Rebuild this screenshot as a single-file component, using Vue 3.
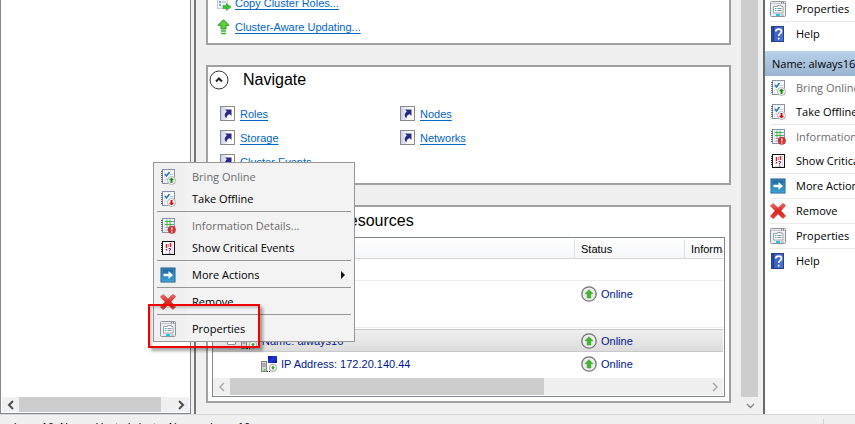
<script setup>
const clusterLinks = [
  { icon: 'copy', label: 'Copy Cluster Roles...' },
  { icon: 'update', label: 'Cluster-Aware Updating...' },
]

const navLinks = ['Roles', 'Nodes', 'Storage', 'Networks', 'Cluster Events']

const menuGroups = [
  [
    { icon: 'online', label: 'Bring Online', disabled: true },
    { icon: 'offline', label: 'Take Offline' },
  ],
  [
    { icon: 'info', label: 'Information Details...', disabled: true },
    { icon: 'events', label: 'Show Critical Events' },
  ],
  [{ icon: 'more', label: 'More Actions', submenu: true }],
  [{ icon: 'remove', label: 'Remove' }],
  [{ icon: 'props', label: 'Properties' }],
]

const clusterActions = [
  [{ icon: 'props', label: 'Properties' }],
  [{ icon: 'help', label: 'Help' }],
]
const resourceActions = [...menuGroups, [{ icon: 'help', label: 'Help' }]]
</script>

<template>
  <svg class="sprite" aria-hidden="true">
    <defs>
      <linearGradient id="g-blue" x1="0" y1="0" x2="0" y2="1">
        <stop offset="0" stop-color="#1c5f97" /><stop offset="1" stop-color="#35a5d8" />
      </linearGradient>
      <linearGradient id="g-help" x1="0" y1="0" x2="1" y2="0">
        <stop offset="0" stop-color="#233f9c" /><stop offset=".25" stop-color="#3a5fc4" /><stop offset="1" stop-color="#4a74d6" />
      </linearGradient>
      <linearGradient id="g-nav" x1="0" y1="0" x2="1" y2="0">
        <stop offset="0" stop-color="#c9cdec" /><stop offset=".6" stop-color="#ffffff" />
      </linearGradient>
      <linearGradient id="g-red" x1="0" y1="0" x2="0" y2="1">
        <stop offset="0" stop-color="#f0706c" /><stop offset=".5" stop-color="#dc2622" /><stop offset="1" stop-color="#e2433c" />
      </linearGradient>
      <linearGradient id="g-screen" x1="0" y1="0" x2="1" y2="1">
        <stop offset="0" stop-color="#0a1390" /><stop offset=".5" stop-color="#1c36d8" /><stop offset="1" stop-color="#0a1a86" />
      </linearGradient>
    </defs>
    <symbol id="notebook" viewBox="0 0 16 16">
      <rect x="2.5" y=".5" width="12" height="14" fill="#f7f9fc" stroke="#8792ac" />
      <path d="M1 2.500h2M1 4.500h2M1 6.500h2M1 8.500h2M1 10.500h2M1 12.500h2" stroke="#6a6a6a" />
      <path d="M4.500 1v13" stroke="#dfe3ea" />
    </symbol>
    <symbol id="online" viewBox="0 0 16 16">
      <use href="#notebook" />
      <path d="M5 5l1.500 2 3-4" fill="none" stroke="#2277c4" stroke-width="1.500" />
      <path d="M10 5.500h3M5.500 10h2" stroke="#b9c4d2" />
      <circle cx="11.500" cy="11.500" r="4" fill="#fff" stroke="#b0b0b0" />
      <path d="M11.500 8.500l2.800 2.800h-1.800V14h-2v-2.700H8.700z" fill="#159215" />
    </symbol>
    <symbol id="offline" viewBox="0 0 16 16">
      <use href="#notebook" />
      <path d="M5 5l1.500 2 3-4" fill="none" stroke="#2277c4" stroke-width="1.500" />
      <path d="M10 5.500h3M5.500 10h2" stroke="#b9c4d2" />
      <circle cx="11.500" cy="11.500" r="4" fill="#fff" stroke="#b0b0b0" />
      <path d="M11.500 14.500l2.800-2.800h-1.800V9h-2v2.700H8.700z" fill="#cf1010" />
    </symbol>
    <symbol id="info" viewBox="0 0 16 16">
      <use href="#notebook" />
      <path d="M11 3.500h3M11 6.500h3M5.500 9.500h6M5.500 12h3" stroke="#8095b8" />
      <path d="M7 1.500v7M10 1.500v7M5 3.500h7M5 6.500h7" stroke="#3cb83c" />
      <circle cx="11.800" cy="11.800" r="4" fill="#cf3434" />
      <path d="M11.800 9.300v3M11.800 13.200v1.200" stroke="#ffe4e4" stroke-width="1.400" />
    </symbol>
    <symbol id="events" viewBox="0 0 16 16">
      <rect x="2.500" y="1.500" width="12" height="13" fill="#fff" stroke="#111" />
      <path d="M1 3.500h2M1 5.500h2M1 7.500h2M1 9.500h2M1 11.500h2" stroke="#222" />
      <path d="M12.500 3v11M5 13.500h8" stroke="#dcdcdc" />
      <path d="M6.500 4v4M10.500 3v4M6.500 9v1.500" stroke="#e01717" stroke-width="1.500" />
      <path d="M8.500 8.500h2v1.500h-1v1.500M9 13h1.500" fill="none" stroke="#7c1fa3" />
      <path d="M8.500 4v3" stroke="#8fa0e8" />
    </symbol>
    <symbol id="more" viewBox="0 0 16 16">
      <rect x="1" y="1" width="14" height="14" fill="url(#g-blue)" stroke="#1b5d8f" />
      <rect x="2" y="2" width="12" height="12" fill="none" stroke="#5aa6cf" stroke-width=".6" />
      <path d="M3.500 6.700h5V4L13 8l-4.500 4V9.300h-5z" fill="#fff" />
    </symbol>
    <symbol id="remove" viewBox="0 0 16 16">
      <path d="M.3 2.800L3.300.4 8 5 12.800.3l2.900 2.100-4.700 5.300 4.700 5.400-2.800 2.500L8 10.900l-4.700 4.800-3-2.500 4.700-5.500z" fill="url(#g-red)" stroke="#c33" stroke-width=".5" />
    </symbol>
    <symbol id="props" viewBox="0 0 16 16">
      <rect x=".5" y=".5" width="15" height="15" rx="1" fill="#eef0f3" stroke="#8e949c" />
      <path d="M1 2.500h14" stroke="#bfc5cc" />
      <path d="M11 1.800h1M13 1.800h1" stroke="#555" />
      <path d="M3.500 5.500h4v-1h4v1h1.500v6.500H3.500z" fill="#fff" stroke="#9aa2ac" />
      <path d="M5 7.500h1.500M5 9.500h1.500" stroke="#21b5e6" />
      <path d="M7.500 7.500h4M7.500 9.500h4" stroke="#8b939d" />
      <path d="M6 14h4" stroke="#22c3f0" stroke-width="2" />
      <path d="M11 14h3" stroke="#b9bfc7" stroke-width="1.500" />
    </symbol>
    <symbol id="help" viewBox="0 0 16 16">
      <rect x="1.500" y=".5" width="12" height="15" fill="url(#g-help)" stroke="#27418f" />
      <path d="M3.500 1v14" stroke="#22398c" />
      <path d="M5.800 5.500C5.800 2.300 11.500 2.300 11.500 5.500 11.500 7.800 8.700 7.600 8.700 10M8.700 11.700v1.900" fill="none" stroke="#fff" stroke-width="1.700" />
    </symbol>
    <symbol id="nav" viewBox="0 0 16 16">
      <rect x=".5" y=".5" width="14" height="14" fill="url(#g-nav)" stroke="#8a8a8a" />
      <path d="M5 3.500h6.500V10L9.800 8.300C7.500 8.700 6.700 9.800 6.600 12 3.900 10.300 4.200 7.500 6.900 5.400z" fill="#29298a" />
    </symbol>
    <symbol id="copy" viewBox="0 0 16 16">
      <rect x="1.500" y=".5" width="10" height="13" fill="#eef3f8" stroke="#c6d0d8" />
      <path d="M3 4h2M3 7h2M3 10h2" stroke="#4f9bd0" stroke-width="1.500" />
      <path d="M6 4h4M6 7h4" stroke="#9fb0c0" />
      <path d="M7 10.500h3.500V8.500l4.500 3.500-4.500 3.500v-2H7z" fill="#37c62f" stroke="#259a20" stroke-width=".6" />
    </symbol>
    <symbol id="update" viewBox="0 0 16 16">
      <path d="M7.500.7L13 6.300h-3V10H5V6.300H2z" fill="#5bd03a" stroke="#2d9a20" />
      <path d="M5 12h5M5 14.500h5" stroke="#3db52a" stroke-width="1.500" />
    </symbol>
    <symbol id="up" viewBox="0 0 16 16">
      <circle cx="8" cy="8" r="7.200" fill="#ededed" stroke="#747474" stroke-width="1.300" />
      <path d="M8 3.700l4 4H9.800v4.300H6.200V7.700H4z" fill="#43b52c" stroke="#2b9a1c" stroke-width=".5" />
    </symbol>
    <symbol id="server" viewBox="0 0 16 16">
      <rect x=".5" y="5.500" width="5" height="10" fill="#d5d5d5" stroke="#858585" />
      <path d="M1.500 8h3M1.500 10h3" stroke="#777" />
      <path d="M2.500 14h2" stroke="#25d325" stroke-width="1.500" />
      <rect x="7" y="0" width="9" height="7" fill="url(#g-screen)" />
      <path d="M6 15.500h3" stroke="#222" stroke-dasharray="1 1" />
      <circle cx="12" cy="11.800" r="3.700" fill="#f3f3f3" stroke="#aaa" />
      <path d="M12 9.800l2 2h-1.200v1.700h-1.600v-1.700H10z" fill="#23a51a" />
    </symbol>
    <symbol id="left" viewBox="0 0 16 16"><path d="M10 4L6 8l4 4" fill="none" stroke="currentColor" stroke-width="2" /></symbol>
    <symbol id="right" viewBox="0 0 16 16"><path d="M6 4l4 4-4 4" fill="none" stroke="currentColor" stroke-width="2" /></symbol>
    <symbol id="thin-left" viewBox="0 0 16 16"><path d="M10 4L6 8l4 4" fill="none" stroke="currentColor" stroke-width="1.400" /></symbol>
    <symbol id="thin-right" viewBox="0 0 16 16"><path d="M6 4l4 4-4 4" fill="none" stroke="currentColor" stroke-width="1.400" /></symbol>
    <symbol id="down" viewBox="0 0 16 16"><path d="M5 6l3.500 3.500L12 6" fill="none" stroke="currentColor" stroke-width="1.400" /></symbol>
  </svg>

  <div class="console">
    <aside class="tree">
      <div class="hscroll">
        <button type="button" aria-label="Scroll left"><svg><use href="#left" /></svg></button>
        <div class="track"><div class="thumb tree-thumb"></div></div>
        <button type="button" aria-label="Scroll right"><svg><use href="#right" /></svg></button>
      </div>
    </aside>

    <main class="center">
      <div class="content">
        <section class="box tasks">
          <a v-for="l in clusterLinks" :key="l.label" href="#" class="link">
            <svg class="icon"><use :href="'#' + l.icon" /></svg><span>{{ l.label }}</span>
          </a>
        </section>

        <section class="box navigate">
          <header>
            <button type="button" class="collapse" aria-label="Collapse">
              <svg viewBox="0 0 20 20"><circle cx="10" cy="10" r="9" fill="#fff" stroke="#333" /><path d="M7 11.500l3-3 3 3" fill="none" stroke="#222" stroke-width="2" /></svg>
            </button>
            <h2>Navigate</h2>
          </header>
          <nav>
            <a v-for="l in navLinks" :key="l" href="#" class="link">
              <svg class="icon"><use href="#nav" /></svg><span>{{ l }}</span>
            </a>
          </nav>
        </section>

        <section class="box resources">
          <header>
            <button type="button" class="collapse" aria-label="Collapse">
              <svg viewBox="0 0 20 20"><circle cx="10" cy="10" r="9" fill="#fff" stroke="#333" /><path d="M7 11.500l3-3 3 3" fill="none" stroke="#222" stroke-width="2" /></svg>
            </button>
            <h2>Cluster Core Resources</h2>
          </header>
          <div class="list">
            <table>
              <colgroup><col /><col class="c-status" /><col class="c-info" /></colgroup>
              <thead>
                <tr><th>Name</th><th>Status</th><th>Information</th></tr>
              </thead>
              <tbody>
                <tr class="group"><td colspan="3"></td></tr>
                <tr class="item"><td></td><td><span class="cell"><svg class="icon"><use href="#up" /></svg>Online</span></td><td></td></tr>
                <tr class="group"><td colspan="3"></td></tr>
                <tr class="gap"><td colspan="3"></td></tr>
                <tr class="item selected">
                  <td><span class="cell parent"><i class="expander"></i><svg class="icon"><use href="#server" /></svg>Name: always16</span></td>
                  <td><span class="cell"><svg class="icon"><use href="#up" /></svg>Online</span></td><td></td>
                </tr>
                <tr class="item">
                  <td><span class="cell child"><svg class="icon"><use href="#server" /></svg>IP Address: 172.20.140.44</span></td>
                  <td><span class="cell"><svg class="icon"><use href="#up" /></svg>Online</span></td><td></td>
                </tr>
              </tbody>
            </table>
            <div class="hscroll pale">
              <button type="button" aria-label="Scroll left"><svg><use href="#thin-left" /></svg></button>
              <div class="track"><div class="thumb list-thumb"></div></div>
              <button type="button" aria-label="Scroll right"><svg><use href="#thin-right" /></svg></button>
            </div>
          </div>
        </section>
      </div>
      <div class="vscroll">
        <div class="vthumb"></div>
        <button type="button" aria-label="Scroll down"><svg><use href="#down" /></svg></button>
      </div>
    </main>

    <aside class="actions">
      <div class="action-list first">
        <div v-for="(g, i) in clusterActions" :key="i" class="action-group">
          <button v-for="a in g" :key="a.label" type="button"><svg class="icon"><use :href="'#' + a.icon" /></svg>{{ a.label }}</button>
        </div>
      </div>
      <h3>Name: always16</h3>
      <div class="action-list">
        <div v-for="(g, i) in resourceActions" :key="i" class="action-group">
          <button v-for="a in g" :key="a.label" type="button" :disabled="a.disabled"><svg class="icon"><use :href="'#' + a.icon" /></svg>{{ a.label }}</button>
        </div>
      </div>
    </aside>

    <footer class="status">
      <span>always16: Name: Hosted cluster Name: always16</span>
      <i></i>
    </footer>

    <div class="menu" role="menu">
      <div v-for="(g, i) in menuGroups" :key="i" class="menu-group">
        <button v-for="m in g" :key="m.label" type="button" role="menuitem" :disabled="m.disabled">
          <svg class="icon"><use :href="'#' + m.icon" /></svg>
          <span>{{ m.label }}</span>
          <i v-if="m.submenu" class="arrow"></i>
        </button>
      </div>
    </div>
    <div class="highlight"></div>
  </div>
</template>

<style>
body { overflow: hidden; background: #f0f0f0; }
</style>

<style scoped>
.sprite { position: absolute; width: 0; height: 0; }
.console {
  position: relative;
  display: grid;
  grid-template: minmax(0, 1fr) 10px / 191px minmax(0, 1fr) 92px;
  height: 100vh;
  overflow: hidden;
  background: #f0f0f0;
  color: #000;
  font: 11px/16px "Liberation Sans", sans-serif;
}
.console * { box-sizing: border-box; }
button { margin: 0; padding: 0; border: 0; background: none; font: inherit; color: inherit; text-align: left; }
.icon { flex: none; width: 16px; height: 16px; }

.tree { display: flex; flex-direction: column; justify-content: flex-end; border: 1px solid #828790; border-top: 0; background: #fff; padding: 1px; }
.hscroll { display: flex; height: 15px; background: #f0f0f0; color: #505050; }
.hscroll button { width: 17px; height: 100%; flex: none; display: flex; align-items: center; justify-content: center; }
.hscroll svg, .vscroll svg { width: 16px; height: 16px; flex: none; }
.track { flex: 1; display: flex; }
.thumb { background: #cdcdcd; }
.tree-thumb { width: 93%; }
.list-thumb { width: 66%; }
.pale { height: 17px; margin-top: 3px; color: #a6a6a6; }

.center { display: flex; margin-left: 3px; margin-right: 5px; border-left: 2px solid #767676; min-width: 0; }
.content { flex: 1; min-width: 0; display: flex; flex-direction: column; justify-content: flex-end; gap: 20px; padding: 0 10px 11px; overflow: hidden; background: #f0f0f0; }
.box { flex: none; background: #fff; border: 2px solid #a0a0a0; }
.tasks { padding: 0 8px 4px; display: flex; flex-direction: column; }
.tasks .link { gap: 3px; }
.link { display: flex; align-items: center; gap: 4px; height: 24px; color: #0066cc; text-decoration: none; }
.link span { text-decoration: underline; text-underline-offset: 2px; }
.box header { display: flex; align-items: center; gap: 14px; height: 26px; padding-left: 1px; }
.collapse { width: 20px; height: 20px; }
.collapse svg { display: block; width: 20px; height: 20px; }
h2 { margin: 0; font: 16px/20px "Liberation Sans", sans-serif; }
.navigate nav { display: grid; grid-template-columns: 180px 180px; padding: 9px 12px; }
.resources { padding: 0 4px 4px; }
.resources header { height: 30px; padding: 0 0 3px; gap: 11px; }

.list { border: 1px solid #828790; padding: 1px 1px 1px 0; overflow: hidden; }
table { width: 100%; table-layout: fixed; border-collapse: separate; border-spacing: 0; }
.c-status { width: 110px; }
.c-info { width: 38px; }
th { height: 20px; padding: 0 6px; font-weight: 400; text-align: left; overflow: hidden; white-space: nowrap; border-bottom: 1px solid #d5d5d5; border-right: 1px solid #dedfe1; background: linear-gradient(#fff, #f5f6f7); }
th:last-child { border-right: 0; padding-right: 0; }
td { padding: 0 6px; height: 23px; color: #00188f; }
.group td { height: 22px; border-bottom: 1px solid #ececec; }
.group + .item td { height: 25px; }
.gap td { height: 1px; padding: 0; }
.selected td { background: linear-gradient(#f0f0f0, #dcdcdc); border-top: 1px solid #c8c8c8; border-bottom: 1px solid #c8c8c8; }
.cell { display: flex; align-items: center; gap: 4px; white-space: nowrap; }
.parent { padding-left: 8px; gap: 5px; }
.child { padding-left: 42px; }
.expander { width: 9px; height: 9px; border: 1px solid #919191; border-radius: 1px; background: #fff; }

.vscroll { flex: none; width: 17px; display: flex; flex-direction: column; color: #8a8a8a; }
.vthumb { flex: 1; background: #cdcdcd; }
.vscroll button { height: 17px; display: flex; align-items: center; justify-content: center; }

.actions { border-left: 2px solid #696969; background: #fff; overflow: hidden; font: 11px/16px "Open Sans", sans-serif; }
.action-list { padding-left: 5px; }
.first { margin-top: -3px; padding-bottom: 5px; }
.action-group + .action-group { border-top: 1px solid #ebebeb; }
.actions button { display: flex; align-items: center; gap: 10px; width: 100%; height: 24px; white-space: nowrap; }
.actions h3 { margin: 0; height: 25px; padding-left: 7px; font: 11px/25px "Open Sans", sans-serif; white-space: nowrap; background: linear-gradient(#b9d1ea, #99b4d1); }
button:disabled { color: #6d6d6d; }

.status { grid-column: 1 / -1; display: flex; justify-content: space-between; border-top: 1px solid #d7d7d7; padding: 4px 31px 0 8px; line-height: 16px; white-space: nowrap; }
.status i { width: 1px; height: 16px; background: #d0d0d0; }

.menu { position: absolute; left: 153px; top: 162px; width: 202px; padding: 3px 3px 1px; border: 1px solid #979797; background: linear-gradient(90deg, #f0f0f0 32px, #f3f3f3 32px); font: 11px/16px "Open Sans", sans-serif; }
.menu-group + .menu-group { padding-top: 5px; background: linear-gradient(#979797, #979797) 0 1px / 100% 1px no-repeat; }
.menu button { display: flex; align-items: center; gap: 16px; width: 100%; height: 22px; padding: 0 6px 0 3px; white-space: nowrap; }
.menu span { flex: 1; }
.arrow { border: 4px solid transparent; border-left-color: #111; border-right: 0; }
.highlight { position: absolute; left: 148px; top: 304px; width: 112px; height: 44px; border: 2px solid #f00000; box-shadow: 3px 3px 3px rgba(0, 0, 0, .35), inset 2px 2px 3px rgba(0, 0, 0, .2); pointer-events: none; }
</style>
